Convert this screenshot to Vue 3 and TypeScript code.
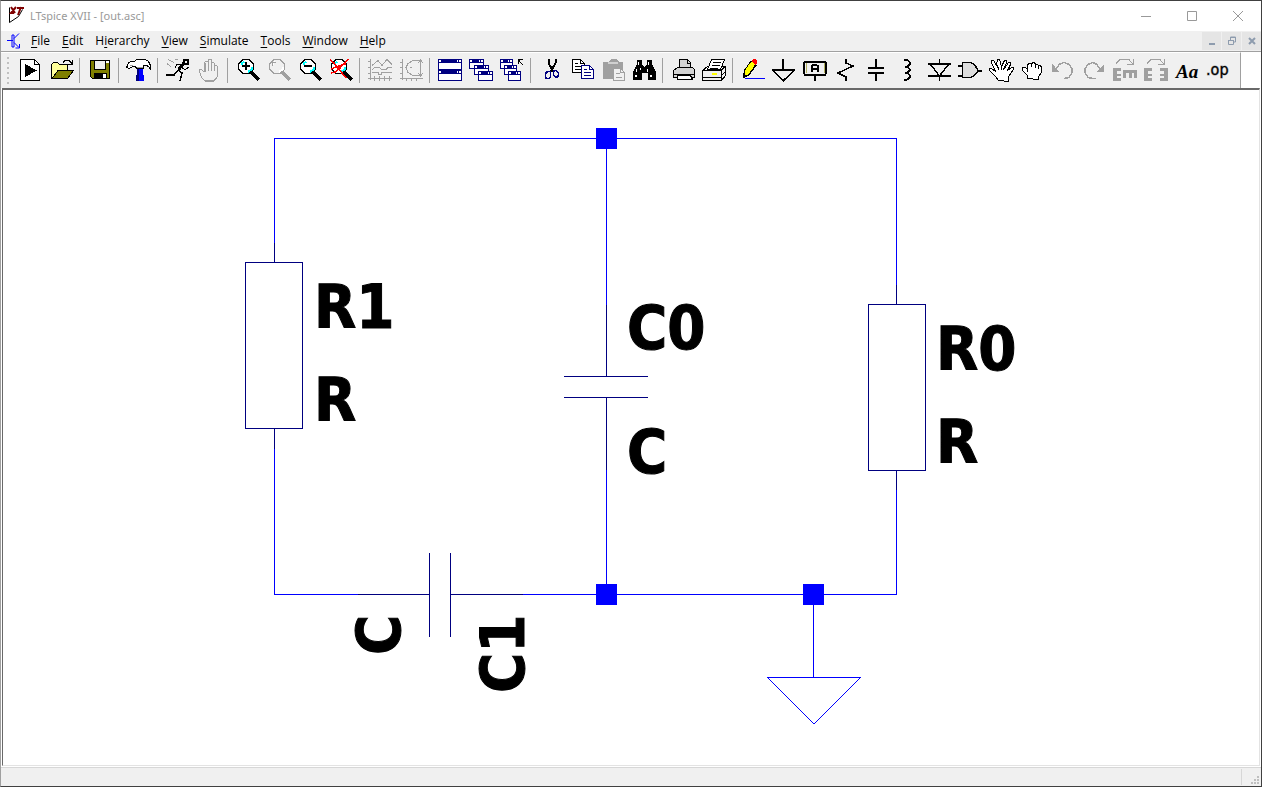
<script setup lang="ts">
interface Shape {
  d: string
  fill?: string
  stroke?: string
  w?: number
}
interface Glyph {
  text: string
  x: number
  y: number
  cls: string
}
interface Tool {
  label: string
  shapes: Shape[]
  glyph?: Glyph
  disabled?: boolean
}

const K = '#000'
const G = '#a0a0a0'
const N = '#000080'
const W = '#fff'
const OLIVE = '#808000'

const line = (d: string, stroke = K, w = 1): Shape => ({ d, stroke, w })
const area = (d: string, fill: string, stroke?: string, w = 1): Shape => ({ d, fill, stroke, w })

const lens = 'M7.500 1.500h5l3 2l2 3v4l-2 3l-3 2h-5l-3-2l-2-3v-4l2-3z'
const lensShapes = (ink: string, glass: string, glint: string): Shape[] => [
  area(lens, glass, ink, 1.5),
  line('M5.500 7V5.500L8.500 3.500', glint, 2),
  line('M12 14L15.500 11.500V9', glint, 2),
  line('M15.500 14.500L23 22', ink, 4),
]
const miniWindow = (x: number, y: number, w: number, h: number): Shape[] => [
  area(`M${x + 0.5} ${y + 0.5}h${w - 1}v${h - 1}h${1 - w}z`, W, N),
  area(`M${x} ${y}h${w}v4h${-w}z`, N),
  area(`M${x + 1} ${y + 1}h2v2h-2zM${x + w - 5} ${y + 1}h1v2h-1zM${x + w - 3} ${y + 1}h2v2h-2z`, W),
]
const page = (x: number, y: number, fill: string, ink: string): Shape[] => [
  area(`M${x + 0.5} ${y + 0.5}h8l4 4v9h-12z`, fill, ink),
  line(`M${x + 8.5} ${y + 0.5}v4h4M${x + 3} ${y + 4.5}h3M${x + 3} ${y + 7.5}h7M${x + 3} ${y + 10.5}h7`, ink),
]

const groups: Tool[][] = [
  [
    {
      label: 'New schematic',
      shapes: [area('M2.500 1.500h14l5 5v16h-19z', W, K), line('M16.500 1.500v5h5'), area('M7 6v13l12-6.500z', K)],
    },
    {
      label: 'Open',
      shapes: [
        area('M2.500 20.500v-14l2-2h4l2 2h8v6', '#ffff9a', K),
        area('M3 20.500l6-8h15.500l-6 8z', OLIVE, K),
        line('M14 4.500l2-2h4l3 3M18.500 6.500h5M23.500 2v5'),
      ],
    },
  ],
  [
    {
      label: 'Save',
      shapes: [
        area('M2.500 2.500h19v18h-17l-2-2z', OLIVE, K),
        area('M6.500 2.500h11v9h-11z', '#f0f0f0', K),
        area('M18 3h3v2h-3z', W),
        area('M6 15h13v6h-13z', K),
        area('M15 16h3v4h-3z', W),
      ],
    },
  ],
  [
    {
      label: 'Control panel',
      shapes: [
        area('M10 10h6v7h1v6h-8v-6h1z', '#0000ff'),
        area('M9 17h3v6h-3zM10 10h2v7h-2z', N),
        area('M.500 7.500l1-3l3-1h3l2-2h9l3 2l2 4v4l-2-3l-2-1h-3v3h-7l-1-2h-3l-3 2l-3-1z', W, K),
        line('M10 9.500h6M3 7.500h3', G),
      ],
    },
  ],
  [
    {
      label: 'Run',
      shapes: [
        line('M17 2h5v4h-4v-3', K, 2),
        line('M18 5l-5 6', K, 3),
        line('M16 6.500h-5l-2 3', K, 1),
        line('M15 9l3 2h2l3-2', K, 1),
        line('M13 11l-5 6H0', K, 1.5),
        line('M12 12l4 3l-1 4l-1 4', K, 1.5),
        line('M2 1.500l6 3M1 5.500l4 3M9 1.500h3', G),
      ],
    },
    {
      label: 'Halt',
      disabled: true,
      shapes: [
        area('M7.500 13.500v-9l1-1h2l1 1v-3h3v3h2l1 1v2h2l1 1v10l-4 5h-8l-4-4l-2-6v-2h2l2 2z', '#f0f0f0', G, 1),
        line('M11.500 4v9M14.500 4v9M17.500 6v7M8 22.500h9M8.500 5v9', G, 1),
      ],
    },
  ],
  [
    { label: 'Zoom area', shapes: [...lensShapes(K, W, '#00ffff'), line('M6 8h8M10 4v8', K, 2)] },
    { label: 'Pan', disabled: true, shapes: [...lensShapes(G, '#f0f0f0', W), line('M5.500 8v-3l3-1', G)] },
    { label: 'Zoom back', shapes: [...lensShapes(K, W, '#00ffff'), line('M6 8h8', K, 2)] },
    {
      label: 'Zoom full extents',
      shapes: [...lensShapes(K, W, '#00ffff'), line('M1 2l4 3l12 15M19 1l-8 9l-5 4l-4 1M2 11l8-3l7-2', '#ff0000', 1.5)],
    },
  ],
  [
    {
      label: 'Pick visible traces',
      disabled: true,
      shapes: [
        line('M2.500 1v21M0 3.500h3M0 9.500h3M0 15.500h3M0 20.500h24M6.500 18v5M11.500 18v5M16.500 18v5M21.500 18v5', G),
        line('M4 7.500l6-5l4 5l5-6l5 5M4 11.500l3-2h4l3 2h4l2-2h4M4 14.500h6v2h3v-2h11', G),
      ],
    },
    {
      label: 'Autorange',
      disabled: true,
      shapes: [
        line('M3.500 1v21M1 4.500h3M1 9.500h3M1 15.500h3M1 20.500h23M7.500 20v3M12.500 20v3M17.500 20v3', G),
        line('M21.500 1v17M21 2.500h-7l-5 3l-2 4l2 5l5 3h7M11 9.500h2M19 5l2.500-3l2.500 3M19 15l2.500 3l2.500-3', G),
      ],
    },
  ],
  [
    { label: 'Tile windows', shapes: [...miniWindow(0, 1, 24, 11), ...miniWindow(0, 12, 24, 11)] },
    { label: 'Cascade windows', shapes: [...miniWindow(0, 1, 15, 10), ...miniWindow(5, 7, 15, 10), ...miniWindow(9, 13, 15, 10)] },
    {
      label: 'Close windows',
      shapes: [
        ...miniWindow(0, 1, 13, 10),
        ...miniWindow(4, 7, 13, 10),
        ...miniWindow(8, 13, 13, 10),
        line('M23 7l-5-5', K, 1),
        area('M18 1h5v1h-3v1h-1v3h-1z', K),
      ],
    },
  ],
  [
    {
      label: 'Cut',
      shapes: [
        line('M9.500 1v4l5 9M16.500 1v4l-5 9', K, 2),
        line('M8.500 13.500h3v5l-1 2h-3l-1-1v-4zM15.500 12.500h2l2 3v2l-2 2h-1l-2-3v-3z', N, 1.5),
      ],
    },
    { label: 'Copy', shapes: [...page(2, 1, W, K), ...page(11, 7, W, N)] },
    {
      label: 'Paste',
      disabled: true,
      shapes: [
        area('M2 4h5l3-3h5l3 3h4v17h-20z', G),
        area('M7 4h10v2h-10z', '#d0d0d0'),
        area('M12.500 10.500h7l4 4v8h-11z', '#f0f0f0', G),
        line('M19.500 10.500v4h4M15 15.500h4M15 19.500h6', G),
      ],
    },
    {
      label: 'Find',
      shapes: [
        area('M5 2h5v4l2 3h1l2-3v-4h5v4l4 8v8h-8v-7h-6v7h-9v-8l4-8z', K),
        area('M6 4h1v3h-1zM4 11h1v3h-1zM3 17h2v2h-2zM16 4h1v3h-1zM15 11h1v3h-1zM18 17h2v2h-2zM8 10h1v2h-1z', W),
      ],
    },
  ],
  [
    {
      label: 'Print',
      shapes: [
        area('M8.500 10.500v-9h8l3 3v7', '#d4d4d4', K),
        area('M2.500 12.500l4-3h15l2 2v8h-21z', '#d4d4d4', K),
        area('M6.500 17.500h13l2 4h-15z', W, K),
        line('M3 16.500h20M16.500 2v3h3', K),
      ],
    },
    {
      label: 'Print setup',
      shapes: [
        area('M.500 12.500l5-4h18l-5 4z', W, K),
        area('M5.500 11.500l4-10h13l-4 10z', W, K),
        line('M11 4.500h8M10 7.500h8M8 10.500h8'),
        area('M.500 12.500h19v10h-19z', '#f0f0f0', K),
        area('M19.500 12.500l4-4v9l-4 5z', '#f0f0f0', K),
        line('M1 19.500h18M19.500 17.500l4-4'),
        area('M10 15h5v2h-5z', '#ffff00'),
      ],
    },
  ],
  [
    {
      label: 'Draw wire',
      shapes: [
        area('M3 19v-6l7-10l5 3l-7 11z', '#ffff00', K, 1),
        area('M10 3l2-2h2l2 2v2l-2 2z', '#ff0000'),
        area('M2 20v-5l4 4z', K),
        line('M15 7l-8 11', K, 1.5),
        line('M4 20.500h20', '#0000ff'),
      ],
    },
    { label: 'Place ground', shapes: [line('M11 1v11M0 12h23', K, 2), line('M1 12.500l10.500 10l10.500-10', K, 1.5)] },
    {
      label: 'Label net',
      shapes: [
        area('M2 4h20l1 1v10l-1 2h-20l-1-2v-10z', '#f0f0f0', K, 2),
        line('M12 17v6', K, 2),
        line('M9 14v-6l1-1h3l2 1v6M9 11h5', K, 2),
        line('M3.500 5v10M21.500 5v10', '#b0b060'),
      ],
    },
    { label: 'Resistor', shapes: [line('M12 1v4l7 3l-15 7l8 4v4', K, 1.5)] },
    { label: 'Capacitor', shapes: [line('M11 1v9M11 15v8M3 10h16M3 15h16', K, 2)] },
    { label: 'Inductor', shapes: [line('M8 1.500h3l3 3v2l-3 2h-2M9 8.500h2l3 3v1l-3 2h-2M9 14.500h2l3 3v2l-3 2h-3', K, 2)] },
    { label: 'Diode', shapes: [line('M12.500 1v5M12.500 18v5', K, 1), line('M1 6h23M1 18h23', K, 1.5), line('M4 7l8.500 11l8.500-11', K, 1.5)] },
    {
      label: 'Component',
      shapes: [line('M0 7.500h4M0 17.500h4M19 12.500h5', K, 2), area('M4.500 4.500h8l4 2l3 5v2l-3 4l-4 2h-8z', '#dcdcdc', K, 1.5)],
    },
    {
      label: 'Move',
      shapes: [
        area('M9.500 22.500l-3-4l-6-6v-2h2l4 3l-4-9v-2h2l3 5l1-6h2l2 7l3-6h2l0 2l-2 6l4-6h2v2l-3 6l4-3h2v2l-5 7v5z', W, K),
        line('M8 7l2 5M12 8l0 4M16 8l-2 4'),
      ],
    },
    {
      label: 'Drag',
      shapes: [
        area('M7.500 20.500v-3l-5-5v-3h3l2 2v-4l1-2h2l1 1l1-2h2l1 2h2l1 1h2l1 2v5l-3 4v3z', W, K),
        line('M7.500 11v3M11.500 5v4M15.500 6v4M18.500 8v3', K),
      ],
    },
    { label: 'Undo', disabled: true, shapes: [line('M5 11.500l3-5l5-2l5 2l3 4v4l-3 5l-5 1', G, 1.5), area('M1 6v8h8l-3-2l-2-3z', G)] },
    { label: 'Redo', disabled: true, shapes: [line('M18 11.500l-3-5l-4-2l-5 2l-3 4v4l3 5l5 1h3', G, 1.5), area('M22 6v8h-8l3-2l2-3z', G)] },
    {
      label: 'Rotate',
      disabled: true,
      shapes: [line('M3 5.500l4-4h9l4 5M14 6.500h7M20.500 1v6', G), area('M0 10h8v3h-4v3h4v2h-4v2h4v3h-8zM10 12h14v8h-3v-5h-2v5h-3v-5h-3v5h-3z', G)],
    },
    {
      label: 'Mirror',
      disabled: true,
      shapes: [line('M3 5.500l4-4h9l4 5M14 6.500h7M20.500 1v6', G), area('M0 10h8v3h-4v3h4v2h-4v2h4v3h-8zM16 10h8v13h-8v-3h4v-2h-4v-2h4v-3h-4z', G)],
    },
    { label: 'Text', shapes: [], glyph: { text: 'Aa', x: 1, y: 20, cls: 'serif' } },
    { label: 'SPICE directive', shapes: [], glyph: { text: '.op', x: 0, y: 17, cls: 'op' } },
  ],
]

const menus = [
  ['', 'F', 'ile'],
  ['', 'E', 'dit'],
  ['H', 'i', 'erarchy'],
  ['', 'V', 'iew'],
  ['', 'S', 'imulate'],
  ['', 'T', 'ools'],
  ['', 'W', 'indow'],
  ['', 'H', 'elp'],
]

const wires = [
  'M274.500 243V138.500H896.500V285',
  'M606.500 138V305',
  'M606.500 470V594',
  'M274.500 449V594.500H358',
  'M523 594.500H896.500V490',
  'M813.500 594V677.500M767 677.500H860.500',
  'M767 677L814 724M861 677L814 724',
]
const parts = [
  'M274.500 243V262.500H302.500V428.500H245.500V262.500H274.500M274.500 428V449',
  'M896.500 285V304.500H925.500V470.500H868.500V304.500H896.500M896.500 470V490',
  'M606.500 305V376.500M564 376.500H648M564 397.500H648M606.500 397V470',
  'M358 594.500H429.500M429.500 553V637M450.500 553V637M450 594.500H523',
]
const nodes = [[596, 128], [596, 584], [803, 584]]
const labels = [
  { text: 'R1', x: 314, y: 328 },
  { text: 'R', x: 314, y: 421 },
  { text: 'C0', x: 627, y: 349 },
  { text: 'C', x: 627, y: 473 },
  { text: 'R0', x: 936, y: 370 },
  { text: 'R', x: 936, y: 463 },
]
const turnedLabels = [
  { text: 'C', x: 400, y: 655 },
  { text: 'C1', x: 524, y: 693 },
]
</script>

<template>
  <div class="window">
    <header class="titlebar">
      <svg class="logo" width="18" height="18" viewBox="0 0 18 18" aria-hidden="true">
        <path d="M2.500 1.500v15l9-6l4-7" fill="#fff" stroke="#000" />
        <path d="M4 1l4 6M9 1l-5 6h3M10 2h7M14 1l-3 8" fill="none" stroke="#800000" stroke-width="2" />
      </svg>
      <h1 class="title">LTspice XVII - [out.asc]</h1>
      <div class="captions">
        <button type="button" aria-label="Minimize"><svg width="12" height="12"><path d="M1 6.500h10" /></svg></button>
        <button type="button" aria-label="Maximize"><svg width="12" height="12"><path d="M1.500 1.500h9v9h-9z" /></svg></button>
        <button type="button" aria-label="Close"><svg width="12" height="12"><path d="M1 1l10 10M11 1l-10 10" /></svg></button>
      </div>
    </header>

    <nav class="menubar">
      <svg class="doc" width="14" height="18" viewBox="0 0 14 18" aria-hidden="true">
        <path d="M0 8.500h6M7 6.500l5-5M7 10.500l5 5M12.500 12v4h-4" />
        <path d="M5 3h2v12h-2z" fill="#0000ff" stroke="none" />
      </svg>
      <button v-for="m in menus" :key="m.join('')" type="button" class="menu">{{ m[0] }}<u>{{ m[1] }}</u>{{ m[2] }}</button>
      <div class="mdi">
        <button type="button" aria-label="Minimize document"><svg width="10" height="10"><path d="M2 8h6" /></svg></button>
        <button type="button" aria-label="Restore document">
          <svg width="10" height="10"><path class="thin" d="M1.500 4.500h5v4h-5zM1 4.500h6M3.500 4v-3h5v5h-2M3 1.500h6" /></svg>
        </button>
        <button type="button" aria-label="Close document"><svg width="10" height="10"><path d="M2 2l6 6M8 2l-6 6" /></svg></button>
      </div>
    </nav>

    <div class="toolrow">
      <div class="toolbar" role="toolbar" aria-label="Schematic tools">
        <span class="grip"></span>
        <div v-for="(group, gi) in groups" :key="gi" class="group">
          <button v-for="t in group" :key="t.label" type="button" class="tool" :aria-label="t.label" :disabled="t.disabled">
            <svg width="24" height="24" viewBox="0 0 24 24" overflow="visible">
              <path
                v-for="(s, i) in t.shapes"
                :key="i"
                :d="s.d"
                :fill="s.fill ?? 'none'"
                :stroke="s.stroke ?? 'none'"
                :stroke-width="s.w"
              />
              <text v-if="t.glyph" :x="t.glyph.x" :y="t.glyph.y" :class="t.glyph.cls">{{ t.glyph.text }}</text>
            </svg>
          </button>
        </div>
      </div>
    </div>

    <main class="canvas">
      <svg class="schematic" width="1060" height="660" viewBox="3 90 1060 660" role="img" aria-label="Schematic">
        <path v-for="d in wires" :key="d" :d="d" class="wire" />
        <path v-for="d in parts" :key="d" :d="d" class="part" />
        <rect v-for="n in nodes" :key="n.join()" :x="n[0]" :y="n[1]" width="21" height="21" class="node" />
        <text v-for="l in labels" :key="`${l.x}-${l.y}`" :x="l.x" :y="l.y">{{ l.text }}</text>
        <text v-for="l in turnedLabels" :key="l.x" :transform="`translate(${l.x} ${l.y}) rotate(-90)`">{{ l.text }}</text>
      </svg>
    </main>

    <footer class="status">
      <svg class="sizer" width="20" height="18" viewBox="0 0 20 18" aria-hidden="true">
        <path d="M.500 1v16" stroke="#d7d7d7" />
        <path d="M16 8h2v2h-2zM13 11h2v2h-2zM16 11h2v2h-2zM10 14h2v2h-2zM13 14h2v2h-2zM16 14h2v2h-2z" fill="#bfbfbf" />
      </svg>
    </footer>
  </div>
</template>

<style>
body {
  margin: 0;
}
</style>

<style scoped>
.window {
  box-sizing: border-box;
  display: flex;
  flex-direction: column;
  min-height: 100vh;
  border: 1px solid #404040;
  border-left-color: #a0a0a0;
  background: #fff;
  font-family: "Open Sans", "Noto Sans", sans-serif;
  font-size: 12px;
  color: #000;
}
button {
  display: flex;
  align-items: center;
  justify-content: center;
  margin: 0;
  padding: 0;
  border: 0;
  background: none;
  font: inherit;
  color: inherit;
}
svg {
  display: block;
  flex: none;
}
.titlebar {
  display: flex;
  align-items: center;
  height: 30px;
  padding-left: 6px;
}
.logo {
  margin-bottom: 2px;
}
.title {
  flex: 1;
  margin: 0 0 2px 5px;
  font-family: "Noto Sans", "Open Sans", sans-serif;
  font-size: 11px;
  font-weight: 400;
  color: #999;
}
.captions {
  display: flex;
}
.captions button {
  width: 46px;
  height: 28px;
}
.captions path {
  fill: none;
  stroke: #999;
}
.menubar {
  display: flex;
  align-items: center;
  height: 20px;
  padding-left: 6px;
  background: #f0f0f0;
}
.doc {
  margin-right: 4px;
}
.doc path {
  fill: none;
  stroke: #0000ff;
}
.menu {
  height: 20px;
  padding: 0 6px 1px;
}
.menu u {
  text-underline-offset: 2px;
}
.mdi {
  display: flex;
  gap: 1px;
  margin-left: auto;
}
.mdi button {
  width: 19px;
  height: 18px;
  background: #e5e5e5;
}
.mdi path {
  fill: none;
  stroke: #8e9cae;
  stroke-width: 2;
}
.mdi .thin {
  stroke-width: 1;
}
.toolrow {
  border-top: 1px solid #a0a0a0;
}
.toolbar {
  box-sizing: border-box;
  display: flex;
  align-items: center;
  width: 1240px;
  max-width: 100%;
  height: 36px;
  border-top: 1px solid #fff;
  border-right: 1px solid #a0a0a0;
  background: #f0f0f0;
}
.grip {
  flex: none;
  width: 2px;
  height: 28px;
  margin: 0 5px 0 6px;
  background: repeating-linear-gradient(#c0c0c0 0 2px, transparent 2px 5px);
}
.group {
  display: flex;
  align-items: center;
}
.group + .group::before {
  content: "";
  width: 1px;
  height: 25px;
  margin: 0 4px 0 3px;
  background: #a0a0a0;
}
.tool {
  width: 31px;
  height: 33px;
  padding-bottom: 1px;
}
.tool path,
.schematic path,
.schematic rect {
  shape-rendering: crispEdges;
}
.serif {
  font: italic bold 19px "Liberation Serif", serif;
}
.op {
  font: 16px "DejaVu Sans Condensed", "Liberation Sans", sans-serif;
  stroke: #000;
  stroke-width: 1;
  stroke-opacity: 0.4;
}
.canvas {
  flex: 1;
  margin: 0 1px 1px;
  border: 1px solid #e3e3e3;
  border-top: 2px solid #696969;
  border-left-color: #696969;
  overflow: hidden;
}
.schematic text {
  font: bold 61px "DejaVu Sans Condensed", Tahoma, "Noto Sans", sans-serif;
  stroke: #000;
  stroke-width: 1;
}
.wire {
  fill: none;
  stroke: #0000ff;
}
.part {
  fill: none;
  stroke: #000080;
}
.node {
  fill: #0000ff;
}
.status {
  display: flex;
  justify-content: flex-end;
  height: 18px;
  border-top: 1px solid #d7d7d7;
  background: #f0f0f0;
}
</style>
